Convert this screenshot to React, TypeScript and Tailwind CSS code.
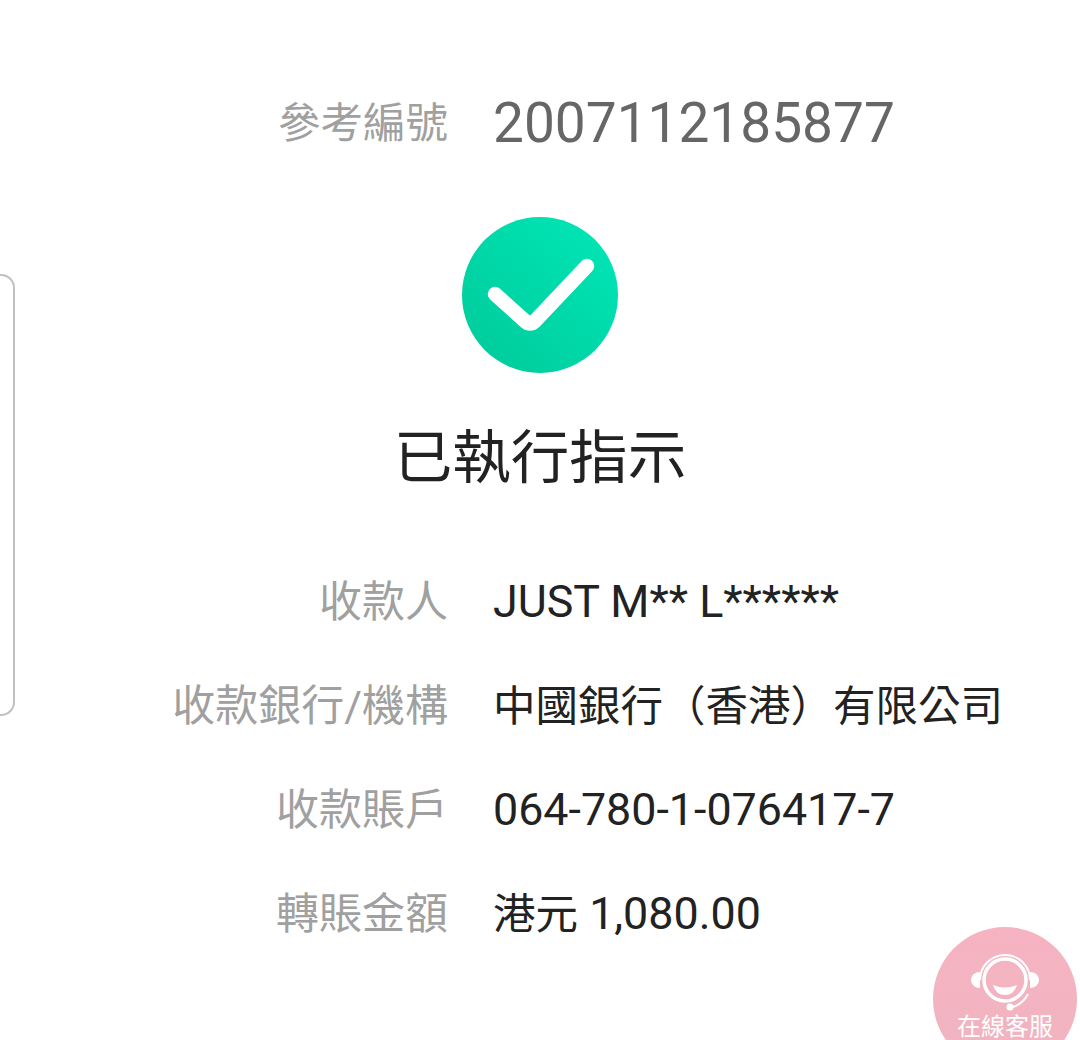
import type { ReactNode } from "react";

const FONT = "font-['Roboto','Noto_Sans_CJK_TC',sans-serif]";

const rows: { label: string; value: ReactNode }[] = [
  { label: "收款人", value: "JUST M** L******" },
  { label: "收款銀行/機構", value: <span className="text-[42.5px]">中國銀行（香港）有限公司</span> },
  { label: "收款賬戶", value: "064-780-1-076417-7" },
  {
    label: "轉賬金額",
    value: (
      <>
        <span className="text-[42.5px]">港元</span> 1,080.00
      </>
    ),
  },
];

function Row({ label, value }: { label: string; value: ReactNode }) {
  return (
    <div className="flex items-center h-[104px]">
      <div className="w-[448px] text-right text-[43px] leading-none text-[#a0a0a0] whitespace-nowrap">
        {label}
      </div>
      <div className="ml-[45px] text-[44.8px] leading-none text-[#222222] whitespace-nowrap">
        {value}
      </div>
    </div>
  );
}

function CheckBadge() {
  return (
    <div className="w-[156px] h-[156px] rounded-full bg-gradient-to-bl from-[#00e8b8] to-[#00c99a] flex items-center justify-center">
      <svg width="156" height="156" viewBox="0 0 156 156" fill="none">
        <path
          d="M33 77 L63 104 Q68 109 73 104 L125 49"
          stroke="#fff"
          strokeWidth="14.5"
          strokeLinecap="round"
          strokeLinejoin="round"
        />
      </svg>
    </div>
  );
}

function ChatButton() {
  return (
    <div className="absolute left-[933px] top-[927px] w-[144px] h-[144px] rounded-full bg-gradient-to-b from-[#f6b3c2] to-[#f0b4c0] flex flex-col items-center">
      <svg width="70" height="62" viewBox="0 0 70 62" fill="none" className="mt-[25px]">
        <path d="M10 28 A 25 25 0 0 1 60 28" stroke="#fff" strokeWidth="2" />
        <circle cx="35" cy="28" r="21" stroke="#fff" strokeWidth="3.5" />
        <path d="M10 20 A 9 8 0 0 0 10 36 Z" fill="#fff" />
        <path d="M60 20 A 9 8 0 0 1 60 36 Z" fill="#fff" />
        <path d="M23 33 Q35 38 47 33 Q44 43 35 43 Q26 43 23 33 Z" fill="#fff" />
        <path d="M58 42 Q52 53 42 55" stroke="#fff" strokeWidth="2" />
        <circle cx="40" cy="55" r="3.5" fill="#fff" />
      </svg>
      <div className="text-[24px] leading-none text-white whitespace-nowrap mt-[1px]">在線客服</div>
    </div>
  );
}

export default function App() {
  return (
    <div className={`relative w-[1080px] h-[1040px] overflow-hidden bg-white ${FONT}`}>
      <div className="flex items-center h-[80px] mt-[83px]">
        <div className="w-[448px] text-right text-[42.5px] leading-none text-[#a0a0a0] pt-[2px]">參考編號</div>
        <div className="ml-[45px] text-[55px] leading-none text-[#666666]">2007112185877</div>
      </div>

      <div className="flex flex-col items-center mt-[54px]">
        <CheckBadge />
        <div className="mt-[50px] text-[58.5px] leading-[70px] text-[#222222] whitespace-nowrap">已執行指示</div>
      </div>

      <div className="mt-[57px]">
        {rows.map((r) => (
          <Row key={r.label} label={r.label} value={r.value} />
        ))}
      </div>

      <div className="absolute left-[-20px] top-[274px] w-[35px] h-[442px] rounded-[14px] border-[2px] border-[#c0c0c0]" />
      <ChatButton />
    </div>
  );
}
